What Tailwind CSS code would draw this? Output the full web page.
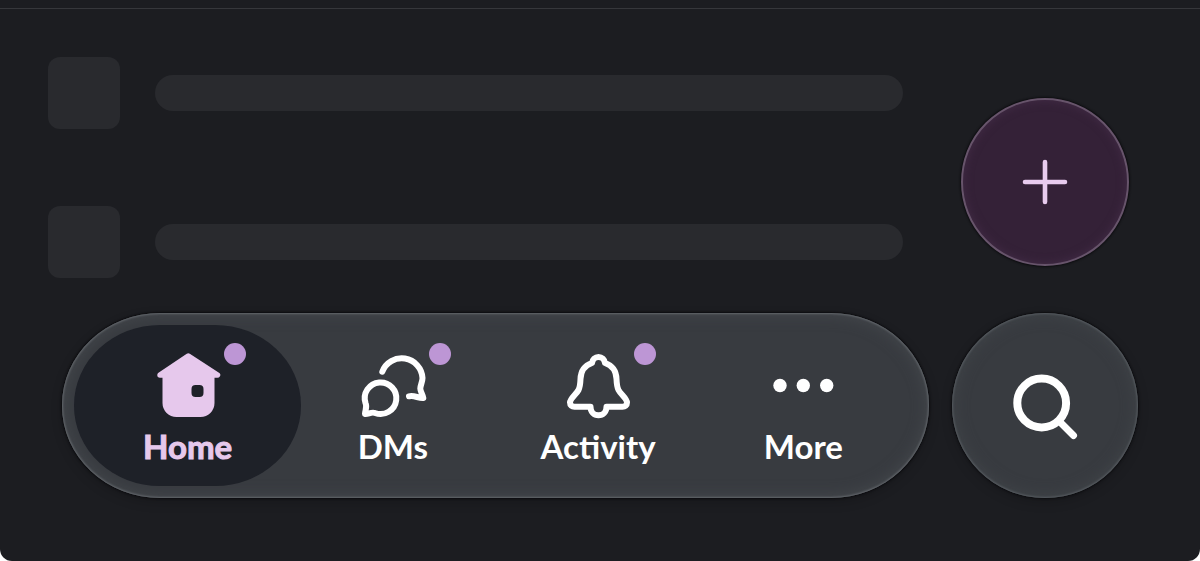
<!DOCTYPE html>
<html lang="en">
<head>
    <meta charset="UTF-8">
    <meta name="viewport" content="width=device-width, initial-scale=1.0">
    <title>Home</title>
    <script src="https://cdn.jsdelivr.net/npm/@tailwindcss/browser@4"></script>
</head>
<body class="bg-white font-['Lato',sans-serif]">

    <main class="min-h-screen flex flex-col rounded-b-xl bg-[#1c1d21] overflow-hidden">
        <div class="h-[9px] border-b border-[#36373b]"></div>

        <!-- Loading rows and compose button -->
        <div class="flex items-end gap-[58px] pt-12 pl-12 pr-[71px]">
            <div class="flex-1 flex flex-col gap-[77px]">
                <div class="flex items-center gap-[35px]">
                    <div class="size-[72px] rounded-xl bg-[#292a2e]"></div>
                    <div class="flex-1 h-9 rounded-full bg-[#292a2e]"></div>
                </div>
                <div class="flex items-center gap-[35px]">
                    <div class="size-[72px] rounded-xl bg-[#292a2e]"></div>
                    <div class="flex-1 h-9 rounded-full bg-[#292a2e]"></div>
                </div>
            </div>
            <button aria-label="New message" class="size-[168px] mb-3 shrink-0 flex items-center justify-center rounded-full bg-[#342137] border-2 border-[#67546b] text-[#e8cbee] shadow-[0_0_2px_1px_#0c0c0f,inset_0_0_10px_#432c47]">
                <svg class="size-12" viewBox="0 0 48 48" fill="none" stroke="currentColor" stroke-width="4.6" stroke-linecap="round">
                    <path d="M24 4v40M4 24h40"/>
                </svg>
            </button>
        </div>

        <!-- Bottom bar -->
        <div class="flex gap-[23px] mt-[35px] px-[62px] pb-[63px]">
            <nav class="flex-1 grid grid-cols-4 px-[23px] py-3 rounded-[98px/92px] bg-[#383b40] text-white text-[33px] leading-10 font-bold shadow-[0_0_2px_1px_#0c0c0f,0_4px_12px_#00000030,inset_0_0_2px_1px_#62666b,inset_0_0_16px_#484c50]">
                <button aria-current="page" class="-mx-[11px] flex flex-col items-center gap-[5px] pt-6 pb-5 rounded-[86px/80px] bg-[#1e2128] text-[#e6c8ec] [-webkit-text-stroke:1px]">
                    <span class="relative">
                        <svg class="size-[72px]" viewBox="0 0 72 72" fill="currentColor">
                            <path d="M8 26 36.3 7 65.5 26z" stroke="currentColor" stroke-width="5.5" stroke-linejoin="round"/>
                            <path fill-rule="evenodd" d="M10.5 24h52v30a14 14 0 0 1-14 14h-24a14 14 0 0 1-14-14zM43.500 36a4 4 0 0 0-4 4v4a4 4 0 0 0 4 4h4a4 4 0 0 0 4-4v-4a4 4 0 0 0-4-4z"/>
                        </svg>
                        <span class="absolute left-full -top-1.5 size-[22px] rounded-full bg-[#bd96d5]"></span>
                    </span>
                    Home
                </button>
                <button class="flex flex-col items-center gap-[5px] pt-6 pb-5">
                    <span class="relative">
                        <svg class="size-[72px]" viewBox="0 0 72 72" fill="none" stroke="currentColor" stroke-width="6" stroke-linecap="round" stroke-linejoin="round">
                            <path d="M25.300 22.700A20.800 20.800 0 0 1 65.500 29C65.500 33 63.300 36.500 63.300 39.500C63.300 42.500 65.700 45.500 66.300 49C61.500 49.500 57 45.800 52 47.300"/>
                            <path d="M18 64A15.800 15.800 0 1 0 8.500 54C10.500 58 8 61.500 8 65C11 65.500 14.500 62.500 18 64z"/>
                        </svg>
                        <span class="absolute left-full -top-1.5 size-[22px] rounded-full bg-[#bd96d5]"></span>
                    </span>
                    DMs
                </button>
                <button class="flex flex-col items-center gap-[5px] pt-6 pb-5">
                    <span class="relative">
                        <svg class="size-[72px]" viewBox="0 0 72 72" fill="none" stroke="currentColor" stroke-width="6" stroke-linecap="round" stroke-linejoin="round">
                            <path d="M36.500 8C33 8 30.500 10.500 30 14C22.500 16.500 18.800 22 18.500 30C18.300 35 17.800 38.500 16.500 41C14.500 45 8 49.500 8 53.500C8 56.500 10 57.700 12.500 57.700H28.500C28.500 63 32 66.300 36.500 66.300S44.500 63 44.500 57.700H60.500C63 57.700 65 56.500 65 53.500C65 49.500 58.500 45 56.500 41C55.200 38.500 54.700 35 54.500 30C54.200 22 50.500 16.500 43 14C42.500 10.500 40 8 36.500 8z"/>
                        </svg>
                        <span class="absolute left-full -top-1.5 size-[22px] rounded-full bg-[#bd96d5]"></span>
                    </span>
                    Activity
                </button>
                <button class="flex flex-col items-center gap-[5px] pt-6 pb-5">
                    <svg class="size-[72px]" viewBox="0 0 72 72" fill="currentColor">
                        <circle cx="13" cy="36.500" r="6.700"/>
                        <circle cx="36.300" cy="36.500" r="6.700"/>
                        <circle cx="59.700" cy="36.500" r="6.700"/>
                    </svg>
                    More
                </button>
            </nav>
            <button aria-label="Search" class="w-[186px] flex items-center justify-center rounded-full bg-[#383b40] text-white shadow-[0_0_2px_1px_#0c0c0f,0_4px_12px_#00000030,inset_0_0_2px_1px_#555a5f,inset_0_0_16px_#43474b]">
                <svg class="size-[72px]" viewBox="0 0 72 72" fill="none" stroke="currentColor" stroke-width="8" stroke-linecap="round">
                    <circle cx="32.700" cy="33" r="24.400"/>
                    <path stroke-width="7" d="M50.500 51.500 64.500 65.500"/>
                </svg>
            </button>
        </div>
    </main>

</body>
</html>
